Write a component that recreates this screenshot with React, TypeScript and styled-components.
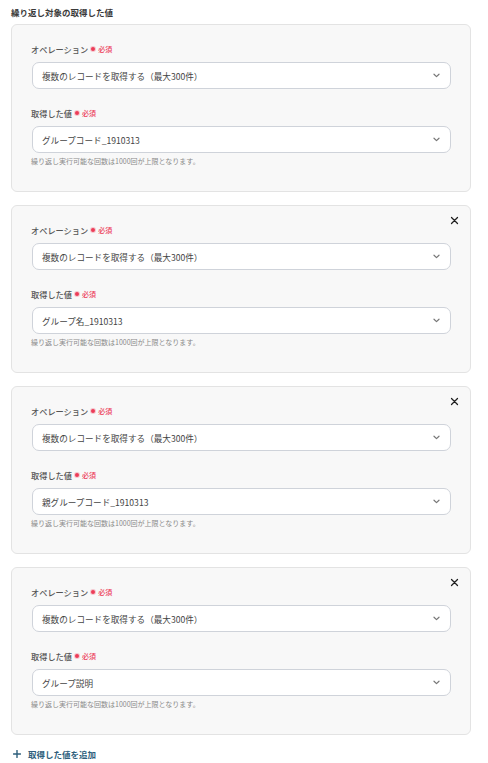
import React from "react";
import styled, { createGlobalStyle } from "styled-components";

const GlobalStyle = createGlobalStyle`
  html, body {
    margin: 0;
    padding: 0;
    background: #ffffff;
  }
  body {
    font-family: "Noto Sans CJK JP", "Noto Sans", sans-serif;
    -webkit-font-smoothing: antialiased;
  }
`;

const Page = styled.div`
  width: 488px;
  box-sizing: border-box;
  padding: 6px 17px 0 11px;
`;

const Title = styled.div`
  font-size: 8.5px;
  line-height: 12px;
  font-weight: 700;
  color: #3a3a3a;
  margin-bottom: 6px;
`;

const CardList = styled.div`
  display: flex;
  flex-direction: column;
  gap: 13px;
`;

const Card = styled.div`
  position: relative;
  box-sizing: border-box;
  height: 168px;
  background: #f8f8f8;
  border: 1px solid #e3e3e3;
  border-radius: 6px;
  padding: 18px 19px 0 19px;
`;

const RemoveButton = styled.button`
  position: absolute;
  top: 10px;
  right: 11px;
  width: 9px;
  height: 9px;
  padding: 0;
  border: 0;
  background: transparent;
  display: flex;
  align-items: center;
  justify-content: center;
  cursor: pointer;
`;

const Field = styled.div<{ $spaced?: boolean }>`
  display: flex;
  flex-direction: column;
  margin-top: ${(p) => (p.$spaced ? "18px" : "0")};
`;

const Label = styled.div`
  display: flex;
  align-items: center;
  font-size: 8.2px;
  line-height: 12px;
  font-weight: 500;
  color: #555555;
  margin-bottom: 7px;
`;

const Required = styled.span`
  display: inline-flex;
  align-items: center;
  margin-left: 3px;
  color: #ec3c58;
  font-size: 7px;
  font-weight: 500;
  &::before {
    content: "";
    width: 4px;
    height: 4px;
    border-radius: 50%;
    background: #ec3c58;
    margin-right: 3px;
    box-shadow: 0 0 0 1px rgba(236, 60, 88, 0.25);
  }
`;

const Select = styled.div`
  box-sizing: border-box;
  height: 27px;
  margin-left: 1px;
  background: #ffffff;
  border: 1px solid #cfd3da;
  border-radius: 7px;
  display: flex;
  align-items: center;
  justify-content: space-between;
  padding: 0 10px 0 9px;
  font-size: 8.6px;
  color: #444444;
`;

const Helper = styled.div`
  margin-top: 3px;
  font-size: 7px;
  line-height: 10px;
  color: #8a8a8a;
`;

const AddButton = styled.button`
  margin-top: 13px;
  margin-left: 2px;
  padding: 0;
  border: 0;
  background: transparent;
  display: flex;
  align-items: center;
  gap: 7px;
  font-family: inherit;
  font-size: 8.5px;
  line-height: 12px;
  font-weight: 700;
  color: #2e5f7c;
  cursor: pointer;
`;

const Chevron = () => (
  <svg width="7" height="5" viewBox="0 0 7 5" fill="none">
    <path d="M1 1.2 L3.5 3.6 L6 1.2" stroke="#777" strokeWidth="1.2" strokeLinecap="round" strokeLinejoin="round" />
  </svg>
);

const CloseIcon = () => (
  <svg width="9" height="9" viewBox="0 0 9 9" fill="none">
    <path d="M1.5 1.5 L7.5 7.5 M7.5 1.5 L1.5 7.5" stroke="#1f1f1f" strokeWidth="1.25" strokeLinecap="round" />
  </svg>
);

const PlusIcon = () => (
  <svg width="8" height="8" viewBox="0 0 8 8" fill="none">
    <path d="M4 0.5 V7.5 M0.5 4 H7.5" stroke="#2e5f7c" strokeWidth="1.4" strokeLinecap="round" />
  </svg>
);

const items = [
  { value: "グループコード_1910313", removable: false },
  { value: "グループ名_1910313", removable: true },
  { value: "親グループコード_1910313", removable: true },
  { value: "グループ説明", removable: true },
];

export default function App() {
  return (
    <>
      <GlobalStyle />
      <Page>
        <Title>繰り返し対象の取得した値</Title>
        <CardList>
          {items.map((item) => (
            <Card key={item.value}>
              {item.removable && (
                <RemoveButton aria-label="削除">
                  <CloseIcon />
                </RemoveButton>
              )}
              <Field>
                <Label>
                  オペレーション<Required>必須</Required>
                </Label>
                <Select>
                  <span>複数のレコードを取得する（最大300件）</span>
                  <Chevron />
                </Select>
              </Field>
              <Field $spaced>
                <Label>
                  取得した値<Required>必須</Required>
                </Label>
                <Select>
                  <span>{item.value}</span>
                  <Chevron />
                </Select>
                <Helper>繰り返し実行可能な回数は1000回が上限となります。</Helper>
              </Field>
            </Card>
          ))}
        </CardList>
        <AddButton>
          <PlusIcon />
          取得した値を追加
        </AddButton>
      </Page>
    </>
  );
}
